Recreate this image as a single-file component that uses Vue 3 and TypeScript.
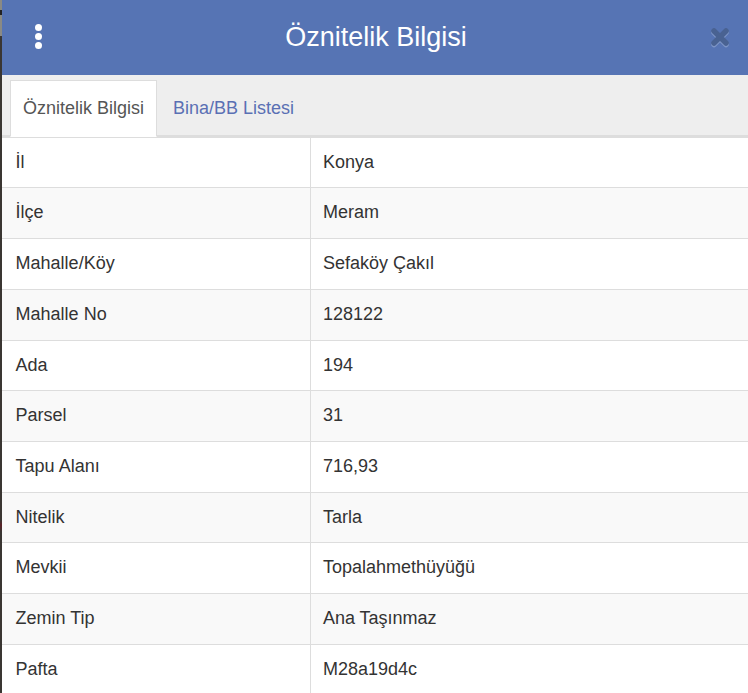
<script setup lang="ts">
import { ref } from 'vue'

const activeTab = ref(0)
const tabs = ['Öznitelik Bilgisi', 'Bina/BB Listesi']

const rows: Array<[string, string]> = [
  ['İl', 'Konya'],
  ['İlçe', 'Meram'],
  ['Mahalle/Köy', 'Sefaköy Çakıl'],
  ['Mahalle No', '128122'],
  ['Ada', '194'],
  ['Parsel', '31'],
  ['Tapu Alanı', '716,93'],
  ['Nitelik', 'Tarla'],
  ['Mevkii', 'Topalahmethüyüğü'],
  ['Zemin Tip', 'Ana Taşınmaz'],
  ['Pafta', 'M28a19d4c'],
]
</script>

<template>
  <div class="window">
    <div class="edge"></div>
    <div class="panel">
      <header class="head">
        <button class="menu" type="button" aria-label="Menü">
          <span></span><span></span><span></span>
        </button>
        <h1 class="title">Öznitelik Bilgisi</h1>
        <button class="close" type="button" aria-label="Kapat">
          <svg width="20" height="21" viewBox="0 0 20 21">
            <path class="x-light" d="M4 5.5 L16 17.5 M16 5.5 L4 17.5" />
            <path class="x-dark" d="M4 4 L16 16 M16 4 L4 16" />
          </svg>
        </button>
      </header>
      <nav class="tabs">
        <a
          v-for="(t, i) in tabs"
          :key="t"
          class="tab"
          :class="{ active: i === activeTab }"
          @click="activeTab = i"
        >{{ t }}</a>
      </nav>
      <table class="info">
        <tbody>
          <tr v-for="r in rows" :key="r[0]">
            <td>{{ r[0] }}</td>
            <td>{{ r[1] }}</td>
          </tr>
        </tbody>
      </table>
    </div>
  </div>
</template>

<style>
html, body {
  margin: 0;
  background: #fff;
  overflow: hidden;
}
</style>

<style scoped>
.window {
  display: flex;
  width: 748px;
  height: 693px;
  overflow: hidden;
  font-family: "Liberation Sans", Arial, sans-serif;
  color: #333;
}
.edge {
  flex: 0 0 2px;
  background: linear-gradient(to bottom, #8a8a84 0, #8a8a84 10px, #222 10px, #222 15px, #8a8a84 15px, #8a8a84 36px, #3a3632 36px, #3a3632 520px, #5a2228 525px, #3a3632 532px, #3a3632 100%);
}
.panel {
  flex: 1;
  min-width: 0;
}
.head {
  display: flex;
  align-items: center;
  justify-content: center;
  position: relative;
  height: 75px;
  padding-left: 2px;
  background: #5674b4;
}
.title {
  margin: 0;
  font-size: 27px;
  font-weight: 400;
  color: #fff;
}
.menu {
  position: absolute;
  left: 33px;
  top: 24px;
  display: flex;
  flex-direction: column;
  gap: 2px;
  padding: 0;
  border: 0;
  background: none;
}
.menu span {
  width: 7px;
  height: 7px;
  border-radius: 50%;
  background: #fff;
}
.close {
  position: absolute;
  right: 18px;
  top: 27px;
  padding: 0;
  border: 0;
  background: none;
  line-height: 0;
}
.x-dark, .x-light {
  fill: none;
  stroke-width: 5.5;
  stroke-linecap: round;
}
.x-dark { stroke: #496292; }
.x-light { stroke: #7d95c6; }
.tabs {
  display: flex;
  gap: 3px;
  height: 61.8px;
  box-sizing: border-box;
  padding: 5px 0 0 8px;
  background: #eee;
  border-bottom: 2px solid #ddd;
}
.tab {
  box-sizing: border-box;
  height: 57px;
  padding: 17px 12px 0;
  border: 1px solid transparent;
  font-size: 18px;
  color: #5a70b4;
}
.tab.active {
  background: #fff;
  border-color: #ddd;
  border-bottom-color: #fff;
  color: #555;
}
.info {
  width: 100%;
  border-collapse: collapse;
  table-layout: fixed;
  font-size: 18px;
}
.info tr:nth-child(even) {
  background: #f9f9f9;
}
.info td {
  height: 50.7px;
  box-sizing: border-box;
  padding: 0 12.4px 0.7px;
  border-top: 1px solid #ddd;
  border-left: 1px solid #ddd;
}
.info td:first-child {
  width: 308px;
  padding-left: 13.6px;
  border-left: 0;
}
</style>
